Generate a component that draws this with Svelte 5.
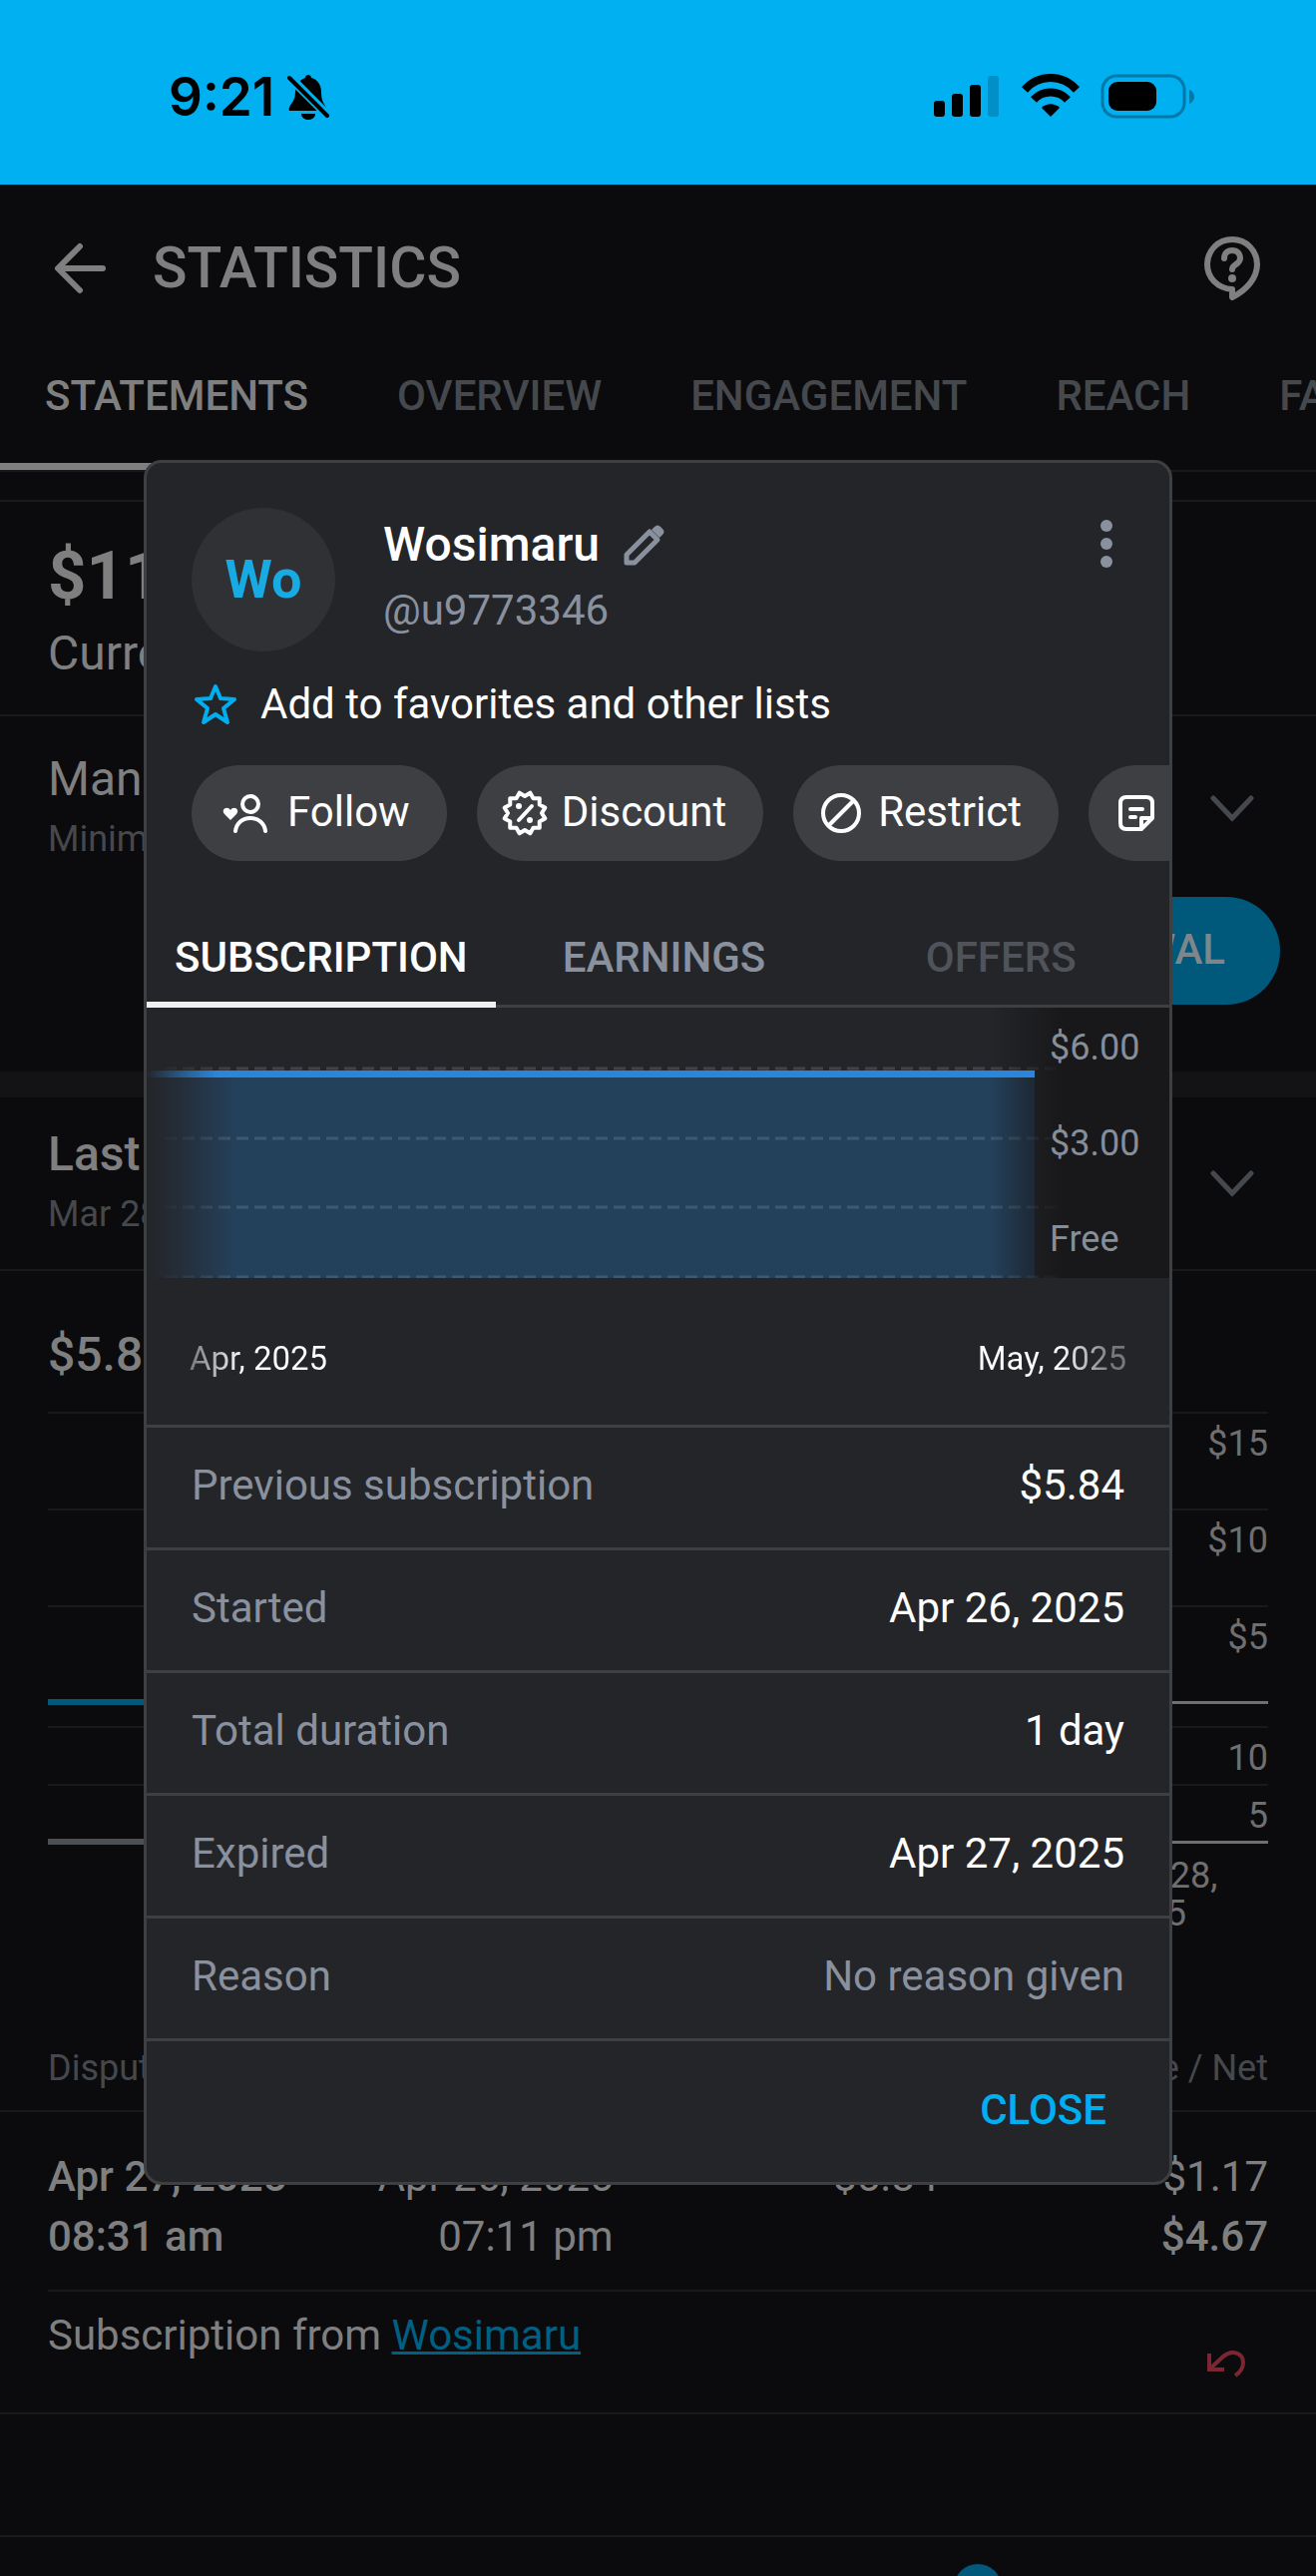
<script lang="ts">
  const pageTabs = ['STATEMENTS', 'OVERVIEW', 'ENGAGEMENT', 'REACH', 'FANS'];
  const userTabs = ['SUBSCRIPTION', 'EARNINGS', 'OFFERS'];

  let activeUserTab = $state('SUBSCRIPTION');

  const details = [
    { label: 'Previous subscription', value: '$5.84' },
    { label: 'Started', value: 'Apr 26, 2025' },
    { label: 'Total duration', value: '1 day' },
    { label: 'Expired', value: 'Apr 27, 2025' },
    { label: 'Reason', value: 'No reason given', muted: true }
  ];

  const priceLabels = [
    { text: '$6.00', y: 52 },
    { text: '$3.00', y: 148 },
    { text: 'Free', y: 244 }
  ];

  // scalloped edge of the discount badge
  const badge = Array.from({ length: 24 }, (_, i) => {
    const r = i % 2 ? 17 : 21;
    const a = ((i + 1) * Math.PI) / 12;
    return `${(24 + r * Math.sin(a)).toFixed(1)},${(24 - r * Math.cos(a)).toFixed(1)}`;
  }).join(' ');
</script>

{#snippet chevron()}
  <svg class="chevron" viewBox="0 0 44 28" aria-hidden="true">
    <path d="M3 3l19 20L41 3" fill="none" stroke="currentColor" stroke-width="5" stroke-linecap="round" />
  </svg>
{/snippet}

<div class="screen">
  <div class="status-bar">
    <div class="clock">
      <span>9:21</span>
      <svg width="44" height="48" viewBox="0 0 44 48" aria-hidden="true">
        <path d="M10 14c2-5 5-8 9-9 0-2 1.500-3 3-3s3 1 3 3c6 1.500 10 7 10 14 0 8 2 11 5 16v3H3c-1-2 0-4 2-7 3-4 4-7 4-13z" />
        <path d="M15 41h14c0 3.500-3 6-7 6s-7-2.500-7-6z" />
        <path d="M4 5l40 40" stroke="#00b0f0" stroke-width="9" />
        <path d="M3 5l38 38" stroke="#000" stroke-width="4" stroke-linecap="round" />
      </svg>
    </div>
    <svg width="264" height="48" viewBox="0 0 264 48" aria-hidden="true">
      <rect x="1" y="28" width="11" height="16" rx="3" />
      <rect x="19" y="21" width="11" height="23" rx="3" />
      <rect x="37" y="12" width="11" height="32" rx="3" />
      <rect x="55" y="3" width="11" height="41" rx="3" fill="#008fc7" />
      <path d="M92 17C106 1 130 1 144 17M101 27c9-10 25-10 34 0" fill="none" stroke="#000" stroke-width="8" />
      <path d="M118 44l-9-9c5-5 13-5 18 0z" />
      <rect x="170" y="3" width="82" height="41" rx="14" fill="none" stroke="#0078a8" stroke-width="3" />
      <rect x="176" y="9" width="48" height="29" rx="9" />
      <path d="M257 17c3 1 5 4 5 7s-2 6-5 7z" fill="#0078a8" />
    </svg>
  </div>

  <header class="page-header">
    <button class="icon-btn" aria-label="Back">
      <svg width="56" height="54" viewBox="0 0 56 54" aria-hidden="true">
        <path d="M27 5L5 27l22 22M6 27h44" fill="none" stroke="currentColor" stroke-width="6" stroke-linecap="round" stroke-linejoin="round" />
      </svg>
    </button>
    <h1>STATISTICS</h1>
    <button class="icon-btn help" aria-label="Help">
      <svg width="56" height="66" viewBox="0 0 56 66" aria-hidden="true">
        <path d="M28 62v-8c-15-1-25-12-25-25C3 15 14 4 28 4s25 11 25 25c0 14-11 26-25 33z" fill="none" stroke="currentColor" stroke-width="6" stroke-linejoin="round" />
        <path d="M20 23c0-5 3-8 8-8s8 3 8 8c0 6-8 6-8 11" fill="none" stroke="currentColor" stroke-width="6" stroke-linecap="round" />
        <circle cx="28" cy="43" r="4" fill="currentColor" />
      </svg>
    </button>
  </header>

  <nav class="page-tabs">
    {#each pageTabs as tab, i}
      <button class:active={i === 0}>{tab}</button>
    {/each}
  </nav>

  <main>
    <section class="balance">
      <div class="amount">$117.38</div>
      <div class="lead">Current balance</div>
    </section>

    <section class="payouts">
      <div class="fold">
        <div>
          <div class="lead">Manual payouts</div>
          <div class="sub">Minimum withdrawal amount is $20</div>
        </div>
        {@render chevron()}
      </div>
      <button class="withdraw">REQUEST WITHDRAWAL</button>
    </section>

    <section class="period">
      <div class="fold">
        <div>
          <div class="lead strong">Last 30 days</div>
          <div class="sub">Mar 28, 2025 - Apr 28, 2025</div>
        </div>
        {@render chevron()}
      </div>
    </section>

    <section class="earnings">
      <div class="lead strong">$5.84</div>
      <div class="plot">
        <div class="grid-row">$15</div>
        <div class="grid-row">$10</div>
        <div class="grid-row">$5</div>
        <div class="axis blue"><i></i><b></b></div>
        <div class="grid-row short">10</div>
        <div class="grid-row short">5</div>
        <div class="axis"><i></i><b></b></div>
        <div class="axis-date">Apr 28,<br />2025</div>
      </div>
    </section>

    <table>
      <colgroup>
        <col class="col-disputed" />
        <col class="col-date" />
        <col class="col-amount" />
        <col />
      </colgroup>
      <thead>
        <tr>
          <th>Disputed on</th>
          <th>Date &amp; time</th>
          <th>Amount</th>
          <th>Fee / Net</th>
        </tr>
      </thead>
      <tbody>
        <tr class="charge">
          <td class="strong">Apr 27, 2025<br />08:31 am</td>
          <td>Apr 26, 2025<br />07:11 pm</td>
          <td>$5.84</td>
          <td>$1.17<br /><span class="strong">$4.67</span></td>
        </tr>
        <tr class="source">
          <td colspan="3">Subscription from <a href="#wosimaru">Wosimaru</a></td>
          <td>
            <svg width="40" height="30" viewBox="0 0 40 30" aria-label="Refunded" role="img">
              <path d="M4 4v16h15M5 19L18 7c9-8 20-3 20 6 0 6-3 10-8 13" fill="none" stroke="#7c2632" stroke-width="4" />
            </svg>
          </td>
        </tr>
      </tbody>
    </table>
  </main>

  <footer class="bottom-nav"><span class="badge"></span></footer>

  <div class="overlay">
    <div class="modal" role="dialog" aria-label="Wosimaru">
      <div class="profile">
        <div class="avatar">Wo</div>
        <div class="who">
          <div class="name">
            Wosimaru
            <button class="icon-btn" aria-label="Rename">
              <svg width="42" height="42" viewBox="0 0 42 42" aria-hidden="true">
                <path d="M3 39v-8L26 8l8 8L11 39z" fill="none" stroke="currentColor" stroke-width="5" stroke-linejoin="round" />
                <path d="M28 6l3-3c2-2 4-2 6 0l2 2c2 2 2 4 0 6l-3 3z" fill="currentColor" />
              </svg>
            </button>
          </div>
          <div class="handle">@u9773346</div>
        </div>
        <button class="icon-btn more" aria-label="More">
          <svg width="12" height="48" viewBox="0 0 12 48" aria-hidden="true" fill="currentColor">
            <circle cx="6" cy="6" r="6" />
            <circle cx="6" cy="24" r="6" />
            <circle cx="6" cy="42" r="6" />
          </svg>
        </button>
      </div>

      <button class="favorite">
        <svg width="48" height="48" viewBox="0 0 48 48" aria-hidden="true">
          <path d="M24 6l5 12 14 1-11 9 4 14-12-8-12 8 4-14L5 19l14-1z" fill="none" stroke="#00aff0" stroke-width="4" stroke-linejoin="round" />
        </svg>
        Add to favorites and other lists
      </button>

      <div class="pills">
        <button>
          <svg width="59" height="48" viewBox="0 0 59 48" fill="none" stroke="currentColor" stroke-width="4" stroke-linecap="round" aria-hidden="true">
            <circle cx="35" cy="15" r="8" />
            <path d="M20 42c1-8 7-13 15-13s14 5 15 13" />
            <path d="M15 31l-6-6c-4-5 3-9 6-4 3-5 10-1 6 4z" fill="currentColor" stroke="none" />
          </svg>
          <span>Follow</span>
        </button>
        <button>
          <svg width="48" height="48" viewBox="0 0 48 48" fill="none" stroke="currentColor" stroke-width="4" stroke-linejoin="round" aria-hidden="true">
            <polygon points={badge} />
            <path d="M18 31l13-14" stroke-linecap="round" />
            <circle cx="18" cy="17" r="3" fill="currentColor" stroke="none" />
            <circle cx="29" cy="31" r="3" fill="currentColor" stroke="none" />
          </svg>
          <span>Discount</span>
        </button>
        <button>
          <svg width="48" height="48" viewBox="0 0 48 48" fill="none" stroke="currentColor" stroke-width="4" aria-hidden="true">
            <circle cx="24" cy="24" r="18" />
            <path d="M12 36l24-24" />
          </svg>
          <span>Restrict</span>
        </button>
        <button>
          <svg width="48" height="48" viewBox="0 0 48 48" fill="none" stroke="currentColor" stroke-width="4" stroke-linejoin="round" aria-hidden="true">
            <path d="M29 40H14c-4 0-6-2-6-6V14c0-4 2-6 6-6h20c4 0 6 2 6 6v15z" />
            <path d="M29 40V29h11" />
            <path d="M18 20h12M18 28h5" stroke-linecap="round" />
          </svg>
          <span>Note</span>
        </button>
      </div>

      <div class="user-tabs">
        {#each userTabs as tab}
          <button
            class:active={tab === activeUserTab}
            disabled={tab === 'OFFERS'}
            onclick={() => (activeUserTab = tab)}>{tab}</button
          >
        {/each}
      </div>

      <svg class="price-chart" viewBox="0 0 1025 271">
        <defs>
          <linearGradient id="fade-left">
            <stop offset="0" stop-color="#242529" />
            <stop offset="0.25" stop-color="#242529" stop-opacity="0.8" />
            <stop offset="1" stop-color="#242529" stop-opacity="0" />
          </linearGradient>
          <linearGradient id="fade-right">
            <stop offset="0" stop-color="#18181a" stop-opacity="0" />
            <stop offset="0.6" stop-color="#18181a" stop-opacity="0.6" />
            <stop offset="1" stop-color="#18181a" />
          </linearGradient>
          <linearGradient id="price-line">
            <stop offset="0" stop-color="#2986dc" stop-opacity="0" />
            <stop offset="0.08" stop-color="#2986dc" />
          </linearGradient>
        </defs>
        <rect y="64" width="890" height="207" fill="#24415c" />
        <g stroke="#8a96a3" stroke-opacity="0.28" stroke-width="3" stroke-dasharray="12 6">
          <path d="M18 61h897M18 131h897M18 200h897M18 270h897" />
        </g>
        <rect width="90" height="271" fill="url(#fade-left)" />
        <rect x="845" width="75" height="271" fill="url(#fade-right)" />
        <rect x="920" width="105" height="271" fill="#18181a" />
        <rect y="63" width="890" height="7" fill="url(#price-line)" />
        <g fill="#868e99" font-size="36">
          {#each priceLabels as label}
            <text x="905" y={label.y}>{label.text}</text>
          {/each}
        </g>
      </svg>

      <div class="range">
        <span class="from">Apr, 2025</span>
        <span class="to">May, 2025</span>
      </div>

      <dl>
        {#each details as item}
          <div>
            <dt>{item.label}</dt>
            <dd class:muted={item.muted}>{item.value}</dd>
          </div>
        {/each}
      </dl>

      <div class="actions">
        <button>CLOSE</button>
      </div>
    </div>
  </div>
</div>

<style>
  :global(body) {
    background: #0b0b0d;
  }

  .screen {
    position: relative;
    display: flex;
    flex-direction: column;
    min-height: 100vh;
    overflow: hidden;
    background: #0b0b0d;
    color: #7f7f80;
    font-family: Roboto, sans-serif;
    font-size: 42px;
    line-height: 60px;
  }

  button {
    padding: 0;
    border: 0;
    background: none;
    color: inherit;
    font: inherit;
    white-space: nowrap;
    cursor: pointer;
  }

  svg {
    display: block;
    flex: none;
  }

  .icon-btn {
    display: block;
    line-height: 0;
  }

  .strong {
    font-weight: 500;
  }

  .status-bar {
    display: flex;
    align-items: center;
    justify-content: space-between;
    height: 185px;
    padding: 9px 120px 0 169px;
    box-sizing: border-box;
    background: #00b0f0;
    color: #000;
  }

  .clock {
    display: flex;
    align-items: center;
    gap: 12px;
    font-family: Inter, sans-serif;
    font-size: 53px;
    font-weight: 600;
  }

  .page-header {
    display: flex;
    align-items: center;
    height: 168px;
    padding: 0 56px 0 53px;
  }

  h1 {
    margin: 0 0 0 44px;
    font-size: 57px;
    font-weight: 500;
  }

  .help {
    margin-left: auto;
  }

  .page-tabs {
    display: flex;
    border-bottom: 2px solid #19191b;
    color: #45494e;
  }

  .page-tabs button {
    flex: none;
    padding: 0 44px 24px 45px;
    border-bottom: 7px solid transparent;
    font-weight: 500;
    line-height: 87px;
  }

  .page-tabs .active {
    border-color: #7f7f80;
    color: #7f7f80;
  }

  .lead {
    font-size: 48px;
    line-height: 61px;
  }

  .sub {
    color: #45484c;
    font-size: 36px;
  }

  .balance {
    margin-top: 28px;
    padding: 34px 48px 24px;
    border-top: 2px solid #19191b;
    border-bottom: 2px solid #19191b;
  }

  .balance .lead {
    line-height: 75px;
  }

  .amount {
    font-size: 67px;
    font-weight: 700;
    line-height: 80px;
  }

  .fold {
    display: flex;
    align-items: center;
    justify-content: space-between;
    padding: 0 62px 0 48px;
  }

  .chevron {
    width: 44px;
    height: 28px;
    color: #45494e;
  }

  .payouts {
    padding: 32px 0 67px;
  }

  .withdraw {
    display: block;
    height: 108px;
    margin: 28px 36px 0 auto;
    padding: 0 55px 3px;
    border-radius: 54px;
    background: #00587a;
    color: #7f868b;
    font-weight: 500;
  }

  .period {
    padding: 26px 0 25px;
    border-top: 26px solid #131315;
    border-bottom: 2px solid #19191b;
  }

  .earnings {
    padding: 53px 48px 106px;
  }

  .plot {
    margin-top: 27px;
    color: #6e6f71;
    font-size: 36px;
    text-align: right;
  }

  .grid-row {
    height: 95px;
    border-top: 2px solid #19191b;
  }

  .grid-row.short {
    height: 56px;
  }

  .axis {
    display: flex;
    align-items: center;
    height: 6px;
    margin-top: -3px;
  }

  .axis i {
    flex: 1;
    height: 6px;
    background: #4c4f54;
  }

  .axis b {
    flex: 1;
    height: 3px;
    background: #6e6f71;
  }

  .axis.blue {
    margin-bottom: 21px;
  }

  .axis.blue i {
    background: #00587a;
  }

  .axis-date {
    width: 113px;
    margin: 12px 50px 0 auto;
    line-height: 38px;
    text-align: left;
  }

  table {
    width: 100%;
    border-collapse: collapse;
    table-layout: fixed;
  }

  .col-disputed {
    width: 23%;
  }

  .col-date {
    width: 23.6%;
  }

  .col-amount {
    width: 24.7%;
  }

  th,
  td {
    padding: 0;
    text-align: right;
    vertical-align: top;
  }

  th {
    padding-bottom: 12px;
    border-bottom: 2px solid #19191b;
    color: #45484c;
    font-size: 36px;
    font-weight: 400;
  }

  th:first-child,
  td:first-child {
    padding-left: 48px;
    text-align: left;
  }

  th:last-child,
  td:last-child {
    padding-right: 48px;
  }

  .charge {
    background: linear-gradient(#19191b, #19191b) 48px 100% / 100% 2px no-repeat;
  }

  .charge td {
    padding-top: 35px;
    padding-bottom: 25px;
  }

  .source td {
    height: 107px;
    padding-top: 14px;
    border-bottom: 2px solid #19191b;
  }

  .source svg {
    margin: 44px 23px 0 auto;
  }

  .source a {
    color: #005f82;
    text-decoration-thickness: 3px;
  }

  .bottom-nav {
    height: 39px;
    margin-top: auto;
    border-top: 2px solid #19191b;
  }

  .badge {
    display: block;
    width: 48px;
    height: 48px;
    margin: 27px 0 -36px 72.5%;
    border-radius: 50%;
    background: #00587a;
  }

  .overlay {
    position: absolute;
    inset: 0;
    padding: 461px 144px 0;
  }

  .modal {
    overflow: hidden;
    border: 3px solid #3e3f43;
    border-radius: 18px;
    background: #242529;
    color: #fefefe;
  }

  .profile {
    display: flex;
    align-items: center;
    padding: 45px 57px 0 45px;
  }

  .avatar {
    width: 144px;
    height: 144px;
    border-radius: 50%;
    background: #303135;
    color: #18aae3;
    font-size: 54px;
    font-weight: 700;
    line-height: 144px;
    text-align: center;
  }

  .who {
    margin-left: 48px;
    padding-bottom: 4px;
    line-height: 66px;
  }

  .name {
    display: flex;
    align-items: center;
    gap: 24px;
    font-size: 48px;
    font-weight: 500;
  }

  .name .icon-btn,
  .handle,
  .more {
    color: #8a919e;
  }

  .more {
    align-self: flex-start;
    margin: 12px 0 0 auto;
  }

  .favorite {
    display: flex;
    align-items: center;
    gap: 21px;
    margin: 21px 45px 29px;
    line-height: 64px;
  }

  .pills {
    display: flex;
    gap: 30px;
    padding-left: 45px;
  }

  .pills button {
    display: flex;
    flex: none;
    align-items: center;
    gap: 13px;
    height: 96px;
    padding: 0 37px 0 24px;
    border-radius: 48px;
    background: #3e3f43;
  }

  .pills span {
    padding-bottom: 3px;
  }

  .user-tabs {
    display: flex;
    margin-top: 53px;
    background: linear-gradient(#3e3f43, #3e3f43) 0 100% / 100% 3px no-repeat;
    color: #8a919e;
  }

  .user-tabs button {
    flex: 1;
    padding: 0 28px;
    border-bottom: 6px solid transparent;
    font-weight: 500;
    line-height: 88px;
  }

  .user-tabs .active {
    border-color: #f0f0f1;
    color: #fefefe;
  }

  .user-tabs button:disabled {
    color: #505359;
  }

  .price-chart {
    width: 100%;
    height: auto;
  }

  .range {
    display: flex;
    justify-content: space-between;
    padding: 51px 43px 36px;
    font-size: 33px;
  }

  .range span {
    background: linear-gradient(90deg, #77787b, #fefefe 40%);
    -webkit-background-clip: text;
    background-clip: text;
    color: transparent;
  }

  .range .to {
    background-image: linear-gradient(90deg, #fefefe 55%, #77787b 90%);
  }

  dl {
    margin: 0;
    border-bottom: 3px solid #3e3f43;
  }

  dl div {
    display: flex;
    justify-content: space-between;
    padding: 0 45px 4px;
    border-top: 3px solid #3e3f43;
    line-height: 116px;
  }

  dd {
    margin: 0;
  }

  dt,
  dd.muted {
    color: #8a919e;
  }

  .actions {
    display: flex;
    justify-content: flex-end;
    padding: 0 63px 3px;
    color: #00aff0;
    font-weight: 500;
    line-height: 138px;
  }
</style>
